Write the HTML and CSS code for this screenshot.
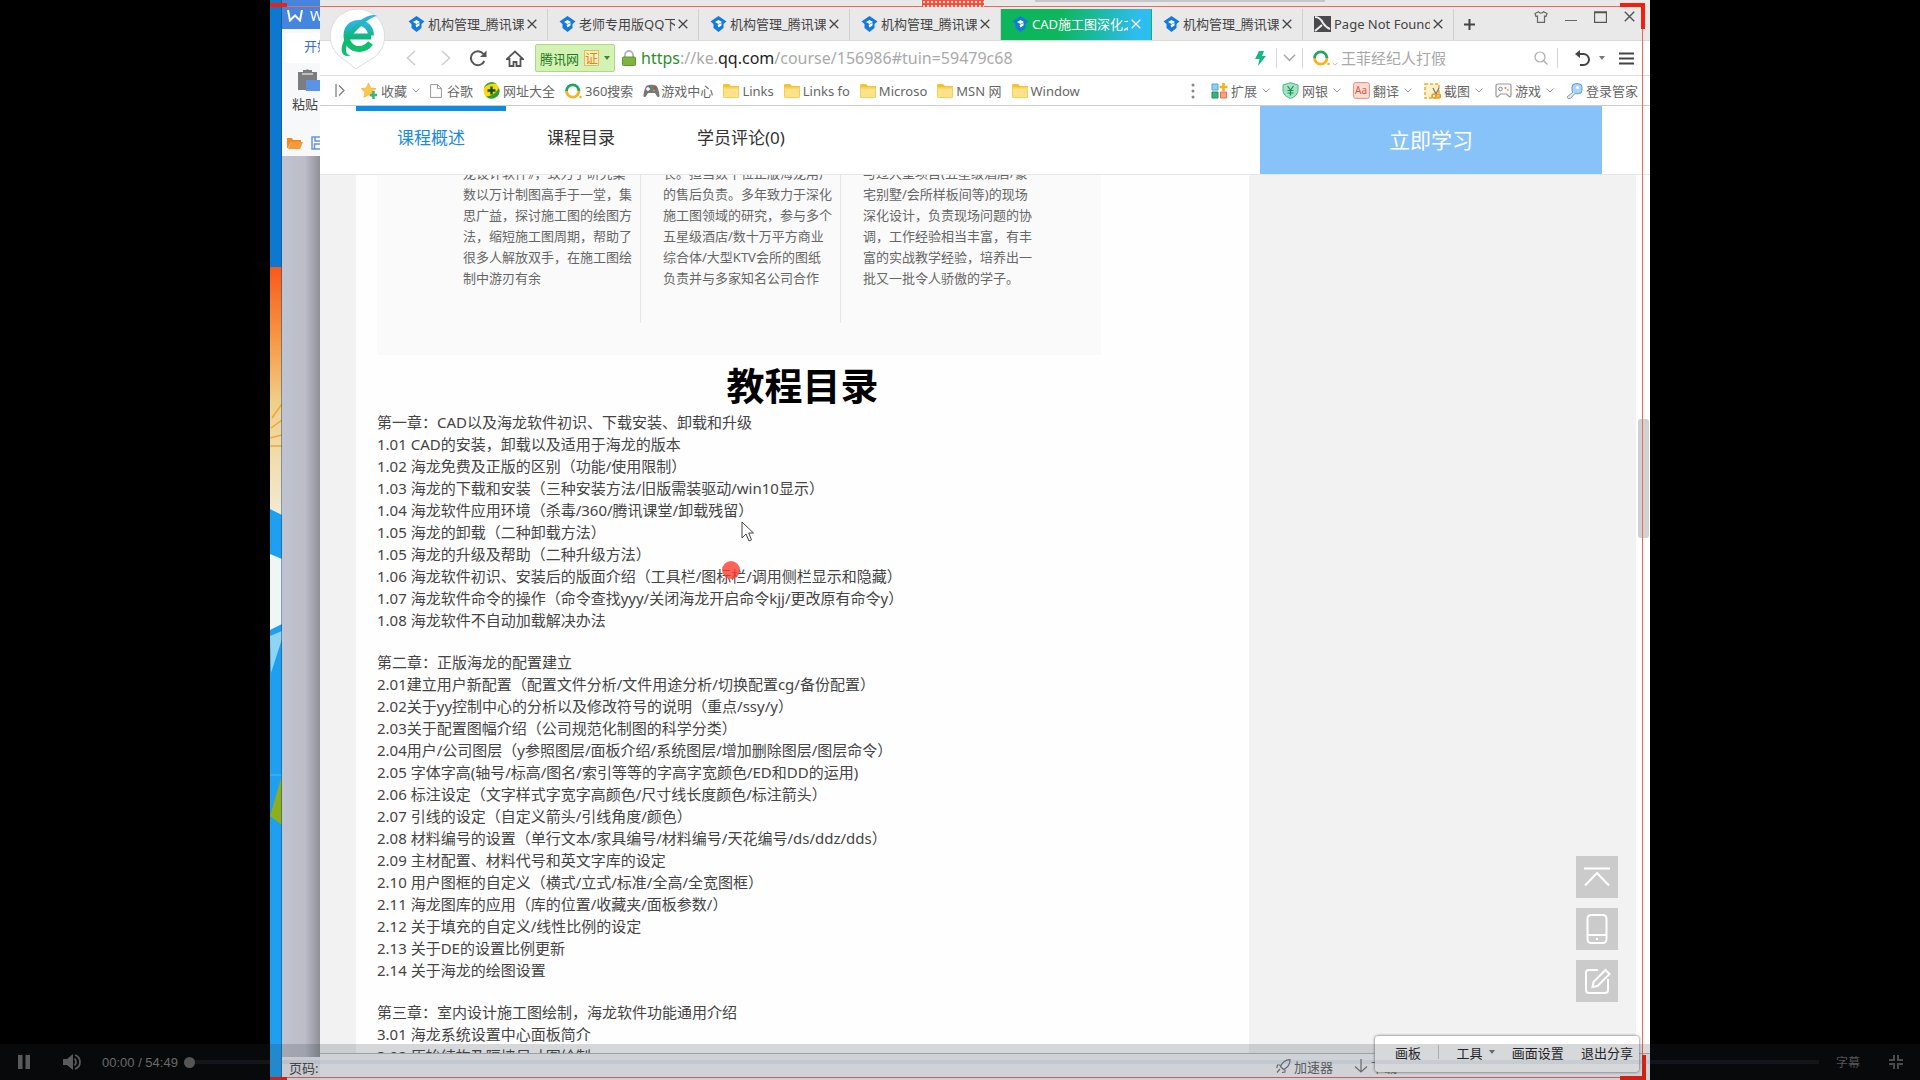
FILE: index.html
```html
<!DOCTYPE html>
<html lang="zh-CN">
<head>
<meta charset="utf-8">
<title>CAD施工图深化</title>
<link rel="stylesheet" href="styles.css">
</head>
<body>
<svg width="0" height="0" class="defs" aria-hidden="true">
  <defs>
    <linearGradient id="eg" x1="0" y1="0" x2="0" y2="1"><stop offset="0" stop-color="#2fb4e8"/><stop offset=".55" stop-color="#0fb67a"/><stop offset="1" stop-color="#0fc268"/></linearGradient>
    <linearGradient id="sun" x1="0" y1="0" x2="0" y2="1"><stop offset="0" stop-color="#f9591a"/><stop offset=".3" stop-color="#f79a45"/><stop offset=".55" stop-color="#f0cf8a"/><stop offset="1" stop-color="#f3ead2"/></linearGradient>
    <symbol id="ke" viewBox="0 0 16 16"><path d="M8 0 0 5.500l3 2.500v4l5 4 5-4V8l3-2.500z" fill="#1478dc"/><path d="M4.500 6 8 4l3.500 2L8 8zM7 9l4-2v2.500l-3 2z" fill="#fff"/></symbol>
    <symbol id="x" viewBox="0 0 10 10"><path d="M.7.700l8.600 8.600M9.300.700.700 9.300" stroke="currentColor" stroke-width="1.300" fill="none"/></symbol>
    <symbol id="chev" viewBox="0 0 8 5"><path d="M.500.500 4 4 7.500.500" stroke="currentColor" fill="none"/></symbol>
    <symbol id="folder" viewBox="0 0 16 14"><path d="M0 1.500C0 .500.500 0 1 0h5l2 2h8v3H0z" fill="#f4c430"/><rect y="3.500" width="16" height="10.500" rx="1" fill="#fde28a"/><rect x=".500" y="4" width="15" height="9.500" rx="1" fill="none" stroke="#f3cf5a"/></symbol>
    <symbol id="ring" viewBox="0 0 17 16"><path d="M1.500 8a6.200 6.200 0 0 1 12.400 0" fill="none" stroke="#1fa463" stroke-width="2.800"/><path d="M1.500 8a6.200 6.200 0 0 0 12.400 0" fill="none" stroke="#f9b21d" stroke-width="2.800"/><circle cx="15.500" cy="14" r="1.300" fill="#f9b21d"/></symbol>
  </defs>
</svg>
<div class="player">
  <main class="stage">
    <svg class="desktop" viewBox="0 0 12 1080" preserveAspectRatio="none" aria-hidden="true">
      <rect width="12" height="1080" fill="#1f9ff0"/>
      <rect width="12" height="267" fill="#0c78d0"/>
      <path d="M0 267h12v248L0 509z" fill="url(#sun)"/>
      <path d="M2 418l10-14M1 428l11-8M0 438l12-3M0 446h12" fill="none" stroke="#e8a93c" stroke-width="1.500"/>
      <path d="M0 554l12 5v65L0 630z" fill="#eef6f8"/>
      <path d="M0 636l12-5v8L1 673z" fill="#8fd4f2"/>
      <path d="M0 775h12" stroke="#4fb8f6"/>
      <path d="M12 775v50L0 816z" fill="#8fae1c"/>
      <path d="M11.500 0v1080" stroke="#0a4a80" stroke-opacity=".5"/>
    </svg>

    <aside class="wps">
      <div class="wps-title"><svg width="16" height="12" viewBox="0 0 16 12"><path d="M1 0l2 10.500 5-5 5 5L15 0" fill="none" stroke="#fff" stroke-width="2"/></svg><span>W</span></div>
      <div class="wps-tab">开始</div>
      <div class="wps-tools">
        <svg width="26" height="23" viewBox="0 0 26 23"><path d="M1 4h5V2h3a2 2 0 0 1 3 0h3v2h5v18H1z" fill="#7d7d80"/><path d="M5 6h11" stroke="#fff"/><rect x="9" y="12" width="17" height="11" fill="#5b93e6"/></svg>
        <span>粘贴</span>
      </div>
      <div class="wps-quick">
        <svg width="16" height="12" viewBox="0 0 16 12"><path d="M0 1h5l1 2h8v2H4L1 11H0z" fill="#f08a24"/><path d="M4 5h12l-3 7H1z" fill="#f79a35"/></svg>
        <svg width="14" height="14" viewBox="0 0 14 14"><path d="M1 1h11l1 2v10H1zM4 1v4h6V1M3.500 13V8h7v5" fill="none" stroke="#6c93d2" stroke-width="1.500"/></svg>
      </div>
      <div class="wps-doc"></div>
      <div class="wps-status">页码:</div>
    </aside>

    <section class="browser">
      <div class="tabbar">
        <nav class="tabs">
          <a class="tab" href="#"><svg width="17" height="16"><use href="#ke"/></svg><span>机构管理_腾讯课堂</span><svg width="10" height="10"><use href="#x"/></svg></a>
          <a class="tab" href="#"><svg width="17" height="16"><use href="#ke"/></svg><span>老师专用版QQ下载</span><svg width="10" height="10"><use href="#x"/></svg></a>
          <a class="tab" href="#"><svg width="17" height="16"><use href="#ke"/></svg><span>机构管理_腾讯课堂</span><svg width="10" height="10"><use href="#x"/></svg></a>
          <a class="tab" href="#"><svg width="17" height="16"><use href="#ke"/></svg><span>机构管理_腾讯课堂</span><svg width="10" height="10"><use href="#x"/></svg></a>
          <a class="tab active" href="#"><svg width="17" height="16"><use href="#ke"/></svg><span>CAD施工图深化之</span><svg width="10" height="10"><use href="#x"/></svg></a>
          <a class="tab" href="#"><svg width="17" height="16"><use href="#ke"/></svg><span>机构管理_腾讯课堂</span><svg width="10" height="10"><use href="#x"/></svg></a>
          <a class="tab" href="#"><svg width="17" height="16" viewBox="0 0 17 16"><path d="M0 0h17v16H0z" fill="#4a4a4e"/><path d="M1 1c4 0 6 2 8 6 2 3 4 5 7 6M1 15l7-6" fill="none" stroke="#eee" stroke-width="2"/></svg><span>Page Not Found</span><svg width="10" height="10"><use href="#x"/></svg></a>
          <button class="newtab" aria-label="新标签"><svg width="11" height="11" viewBox="0 0 11 11"><path d="M5.500 0v11M0 5.500h11" stroke="#444" stroke-width="2"/></svg></button>
        </nav>
        <div class="winbtns">
          <button aria-label="皮肤"><svg width="14" height="12" viewBox="0 0 14 12"><path d="M4.500.700 1 2.500l1 3 1.500-.500v6.300h7V5l1.500.500 1-3L9.500.700C8.500 2.500 5.500 2.500 4.500.700z" fill="none" stroke="#666" stroke-width="1.200"/></svg></button>
          <button aria-label="最小化"><svg width="12" height="12" viewBox="0 0 12 12"><path d="M0 9.500h12" stroke="#666"/></svg></button>
          <button aria-label="最大化"><svg width="13" height="12" viewBox="0 0 13 12"><path d="M.500 1h12v10.500H.500zM0 1.500h13" fill="none" stroke="#555" stroke-width="1.300"/></svg></button>
          <button aria-label="关闭"><svg width="11" height="11"><use href="#x"/></svg></button>
        </div>
      </div>

      <div class="address">
        <button class="dim" aria-label="后退"><svg width="10" height="16" viewBox="0 0 10 16"><path d="M9 1 1.500 8 9 15" fill="none" stroke="#cfcfcf" stroke-width="1.700"/></svg></button>
        <button class="dim" aria-label="前进"><svg width="10" height="16" viewBox="0 0 10 16"><path d="M1 1l7.500 7L1 15" fill="none" stroke="#cfcfcf" stroke-width="1.700"/></svg></button>
        <button aria-label="刷新"><svg width="18" height="17" viewBox="0 0 18 17"><path d="M14.500 4A7 7 0 1 0 15.300 11" fill="none" stroke="#555" stroke-width="2"/><path d="M17.500.500V7H11z" fill="#555"/></svg></button>
        <button aria-label="主页"><svg width="18" height="17" viewBox="0 0 18 17"><path d="M1 9l8-7.500L17 9h-2.500v7h-4v-4h-3v4h-4V9z" fill="none" stroke="#555" stroke-width="1.800"/></svg></button>
        <button class="site"><span>腾讯网</span><b>证</b><i class="caret"></i></button>
        <svg class="lock" width="14" height="16" viewBox="0 0 14 16"><path d="M3 8V5a4 4 0 0 1 8 0v3" fill="none" stroke="#b5b5b5" stroke-width="1.800"/><rect x=".500" y="7" width="13" height="8.500" rx="1" fill="#7cb342" stroke="#5f9a2a"/></svg>
        <div class="url" role="textbox" aria-label="地址" contenteditable="true" spellcheck="false"><span class="secure">https</span>://ke.<span class="host">qq.com</span>/course/156986#tuin=59479c68</div>
        <svg width="11" height="15" viewBox="0 0 11 15"><path d="M4 0h5L7 5h4L3 15l1.500-7H0z" fill="#16b888"/></svg>
        <button class="drop" aria-label="历史"><svg width="13" height="8" viewBox="0 0 8 5"><use href="#chev"/></svg></button>
        <form class="search">
          <svg width="17" height="16"><use href="#ring"/></svg><svg class="engine" width="6" height="4" viewBox="0 0 8 5"><use href="#chev"/></svg>
          <input type="text" aria-label="搜索" placeholder="王菲经纪人打假">
          <svg width="14" height="14" viewBox="0 0 14 14"><circle cx="6" cy="6" r="5" fill="none" stroke="#aaa" stroke-width="1.200"/><path d="M9.700 9.700 13.500 13.500" stroke="#aaa" stroke-width="1.300"/></svg>
        </form>
        <button class="undo" aria-label="恢复"><svg width="15" height="16" viewBox="0 0 15 16"><path d="M3 4h5.500a5 5 0 0 1 0 11H5" fill="none" stroke="#444" stroke-width="2"/><path d="M0 4l5-4v8z" fill="#444"/></svg></button>
        <i class="caret grey"></i>
        <button class="menu" aria-label="菜单"><svg width="15" height="13" viewBox="0 0 15 13"><path d="M0 1.500h15M0 6.500h15M0 11.500h15" stroke="#444" stroke-width="2"/></svg></button>
      </div>

      <div class="bookmarks">
        <svg class="side" width="10" height="13" viewBox="0 0 10 13"><path d="M1 0v13M4 1.500l5 5-5 5" fill="none" stroke="#777" stroke-width="1.200"/></svg>
        <a href="#"><svg width="17" height="16" viewBox="0 0 17 16"><path d="M7.500 0l2.300 5 5.200.500-4 3.600 1.200 5.400-4.700-2.800L2.800 14.500 4 9.100 0 5.500 5.200 5z" fill="#fbc84a" stroke="#eda92d" stroke-width=".600"/><path d="M12.500 8v8M9 12h7" stroke="#3eb37c" stroke-width="2.500"/></svg>收藏<svg class="chev" width="8" height="5"><use href="#chev"/></svg></a>
        <a class="page" href="#"><svg width="12" height="14" viewBox="0 0 12 14"><path d="M.600.600h7l3.800 3.800v9H.600zM7.500.600v4h4" fill="#fff" stroke="#999"/></svg>谷歌</a>
        <a href="#"><svg width="17" height="17" viewBox="0 0 17 17"><circle cx="8.500" cy="8.500" r="8" fill="#f6d912"/><path d="M3 14.500A8 8 0 0 0 16 6c-3 5-7 8-13 8.500z" fill="#2f9b36"/><path d="M1 6a8 8 0 0 1 13-4C9 1 4 2 1 6z" fill="#3aa53e"/><path d="M8.500 4.500v8M4.500 8.500h8" stroke="#14501d" stroke-width="2.400"/></svg>网址大全</a>
        <a href="#"><svg width="17" height="16"><use href="#ring"/></svg>360搜索</a>
        <a class="game" href="#"><svg width="17" height="14" viewBox="0 0 17 14"><path d="M4 1.500c2-1 7-1 9 0 2 1 3.500 8 3.500 10s-2 2-3 0L12 9H5l-1.500 2.500c-1 2-3 2-3 0S2 2.500 4 1.500z" fill="#777"/><path d="M5 3v4M3 5h4" stroke="#fff" stroke-width="1.400"/><circle cx="12" cy="4" r="1.200" fill="#e33"/><circle cx="11" cy="6.500" r="1.100" fill="#5c5"/></svg>游戏中心</a>
        <a href="#"><svg width="16" height="14"><use href="#folder"/></svg>Links</a>
        <a href="#"><svg width="16" height="14"><use href="#folder"/></svg>Links fo</a>
        <a href="#"><svg width="16" height="14"><use href="#folder"/></svg>Microso</a>
        <a href="#"><svg width="16" height="14"><use href="#folder"/></svg>MSN 网</a>
        <a href="#"><svg width="16" height="14"><use href="#folder"/></svg>Window</a>
        <div class="ext">
          <svg class="dots" width="4" height="16" viewBox="0 0 4 16"><circle cx="2" cy="2" r="1.500"/><circle cx="2" cy="8" r="1.500"/><circle cx="2" cy="14" r="1.500"/></svg>
          <a href="#"><svg width="17" height="16" viewBox="0 0 17 16"><path d="M1 1h6v6H1z" fill="#8fd0f5" stroke="#4aa3dc"/><path d="M1 9h6v6H1z" fill="#35b57a" stroke="#228e5b"/><path d="M9.500 9h6v6h-6z" fill="#ffa184" stroke="#ef6a4a"/><path d="M12.500 0v8M8.500 4h8" stroke="#f3b11b" stroke-width="2.600"/></svg>扩展<svg class="chev" width="8" height="5"><use href="#chev"/></svg></a>
          <a href="#"><svg width="17" height="17" viewBox="0 0 17 17"><path d="M8.500.700 16 3v5c0 4-3 7-7.500 8.500C4 15 1 12 1 8V3z" fill="#a5e3c4" stroke="#44b582"/><path d="M5.500 4l3 4 3-4M8.500 8v5.500M5.500 8.500h6M5.500 11h6" stroke="#1c8d5a" stroke-width="1.200" fill="none"/></svg>网银<svg class="chev" width="8" height="5"><use href="#chev"/></svg></a>
          <a href="#"><svg width="17" height="17" viewBox="0 0 17 17"><rect x=".600" y=".600" width="15.800" height="15.800" rx="2" fill="#fcdcd4" stroke="#e98b76"/><text x="2" y="12" font-size="10" fill="#d9553c">Aa</text></svg>翻译<svg class="chev" width="8" height="5"><use href="#chev"/></svg></a>
          <a href="#"><svg width="17" height="16" viewBox="0 0 17 16"><rect x="1" y="1" width="14" height="14" fill="#fff0c8" stroke="#f0a92a" stroke-width="1.500" stroke-dasharray="3 2"/><path d="M9 5l3 6M15 5l-3 6" stroke="#777" stroke-width="1.300"/><circle cx="10" cy="13" r="2" fill="none" stroke="#ef9a1e" stroke-width="1.500"/><circle cx="14.500" cy="13" r="2" fill="none" stroke="#ef9a1e" stroke-width="1.500"/></svg>截图<svg class="chev" width="8" height="5"><use href="#chev"/></svg></a>
          <a href="#"><svg width="17" height="15" viewBox="0 0 17 15"><path d="M3 1h11q2 0 2 2v9q0 2-1.500 2L11.500 11h-6l-3 3Q1 14 1 12V3q0-2 2-2z" fill="#fafafa" stroke="#999" stroke-width="1.200"/><circle cx="5.500" cy="6" r="1.800" fill="none" stroke="#888"/><circle cx="10.500" cy="5" r="1" fill="#e66"/><circle cx="12.800" cy="7" r="1" fill="#e9a93c"/></svg>游戏<svg class="chev" width="8" height="5"><use href="#chev"/></svg></a>
          <a href="#"><svg width="17" height="16" viewBox="0 0 17 16"><rect x="6" y=".700" width="10" height="10" rx="3.500" fill="#a9d4f3" stroke="#5c9ccc"/><path d="M7 9l-6 5 1 1.500h2.500L9 10.500" fill="#dceaf4" stroke="#8899a8"/><circle cx="11.500" cy="4.500" r="1.500" fill="#fff"/></svg>登录管家</a>
        </div>
      </div>

      <header class="coursebar">
        <nav>
          <a class="on" href="#">课程概述</a><a href="#">课程目录</a><a href="#">学员评论(0)</a>
        </nav>
        <button class="study">立即学习</button>
      </header>

      <div class="viewport">
        <article class="sheet">
          <div class="intro">
            <p>龙设计软件》，致力于研究集<br>数以万计制图高手于一堂，集<br>思广益，探讨施工图的绘图方<br>法，缩短施工图周期，帮助了<br>很多人解放双手，在施工图绘<br>制中游刃有余</p>
            <p>长。担当数十位正版海龙用户<br>的售后负责。多年致力于深化<br>施工图领域的研究，参与多个<br>五星级酒店/数十万平方商业<br>综合体/大型KTV会所的图纸<br>负责并与多家知名公司合作</p>
            <p>与过大型项目(五星级酒店/豪<br>宅别墅/会所样板间等)的现场<br>深化设计，负责现场问题的协<br>调，工作经验相当丰富，有丰<br>富的实战教学经验，培养出一<br>批又一批令人骄傲的学子。</p>
          </div>
          <h1>教程目录</h1>
          <ul>
            <li>第一章：CAD以及海龙软件初识、下载安装、卸载和升级</li>
            <li>1.01 CAD的安装，卸载以及适用于海龙的版本</li>
            <li>1.02 海龙免费及正版的区别（功能/使用限制）</li>
            <li>1.03 海龙的下载和安装（三种安装方法/旧版需装驱动/win10显示）</li>
            <li>1.04 海龙软件应用环境（杀毒/360/腾讯课堂/卸载残留）</li>
            <li>1.05 海龙的卸载（二种卸载方法）</li>
            <li>1.05 海龙的升级及帮助（二种升级方法）</li>
            <li>1.06 海龙软件初识、安装后的版面介绍（工具栏/图标栏/调用侧栏显示和隐藏）</li>
            <li>1.07 海龙软件命令的操作（命令查找yyy/关闭海龙开启命令kjj/更改原有命令y）</li>
            <li>1.08 海龙软件不自动加载解决办法</li>
          </ul>
          <ul>
            <li>第二章：正版海龙的配置建立</li>
            <li>2.01建立用户新配置（配置文件分析/文件用途分析/切换配置cg/备份配置）</li>
            <li>2.02关于yy控制中心的分析以及修改符号的说明（重点/ssy/y）</li>
            <li>2.03关于配置图幅介绍（公司规范化制图的科学分类）</li>
            <li>2.04用户/公司图层（y参照图层/面板介绍/系统图层/增加删除图层/图层命令）</li>
            <li>2.05 字体字高(轴号/标高/图名/索引等等的字高字宽颜色/ED和DD的运用)</li>
            <li>2.06 标注设定（文字样式字宽字高颜色/尺寸线长度颜色/标注箭头）</li>
            <li>2.07 引线的设定（自定义箭头/引线角度/颜色）</li>
            <li>2.08 材料编号的设置（单行文本/家具编号/材料编号/天花编号/ds/ddz/dds）</li>
            <li>2.09 主材配置、材料代号和英文字库的设定</li>
            <li>2.10 用户图框的自定义（横式/立式/标准/全高/全宽图框）</li>
            <li>2.11 海龙图库的应用（库的位置/收藏夹/面板参数/）</li>
            <li>2.12 关于填充的自定义/线性比例的设定</li>
            <li>2.13 关于DE的设置比例更新</li>
            <li>2.14 关于海龙的绘图设置</li>
          </ul>
          <ul>
            <li>第三章：室内设计施工图绘制，海龙软件功能通用介绍</li>
            <li>3.01 海龙系统设置中心面板简介</li>
            <li>3.02 原始结构及隔墙尺寸图绘制</li>
          </ul>
        </article>
        <div class="scroll"><div class="thumb"></div></div>
        <div class="float">
          <button aria-label="返回顶部"><svg width="28" height="20" viewBox="0 0 28 20"><path d="M1 1.500h26M2 18.500 14 6l12 12.500" fill="none" stroke="#fff" stroke-width="2"/></svg></button>
          <button aria-label="手机版"><svg width="22" height="30" viewBox="0 0 22 30"><rect x="1.500" y="1" width="19" height="28" rx="3.500" fill="none" stroke="#fff" stroke-width="2"/><path d="M2 21h18" stroke="#fff" stroke-width="2"/><circle cx="11" cy="25" r="1.200" fill="#fff"/></svg></button>
          <button aria-label="反馈"><svg width="27" height="26" viewBox="0 0 27 26"><path d="M14 2H5Q2 2 2 5v17q0 3 3 3h16q3 0 3-3V11M8.500 19l1-5L21.500 2l4 4L13.500 18z" fill="none" stroke="#fff" stroke-width="2"/></svg></button>
        </div>
      </div>

      <footer class="statusbar">
        <svg width="15" height="14" viewBox="0 0 15 14"><path d="M14 .700C9 1 6 4 4.500 7.500L7.500 10.500C11 9 14 6 14 .700zM4.500 6H1.500L.700 9M9 10.500v2.500L6 13.500M4 10l-3 3.500" fill="none" stroke="#777" stroke-width="1.200"/></svg>
        <span>加速器</span>
        <svg class="down" width="14" height="14" viewBox="0 0 14 14"><path d="M7 0v13M1 7.500l6 5.500 6-5.500" fill="none" stroke="#777" stroke-width="1.200"/></svg>
        <span>下载</span>
      </footer>
      <svg class="logo" width="56" height="64" viewBox="0 0 56 64">
        <path d="M28 1a27 27 0 0 1 11 51.500Q33 56 26 61 20 56 14 51.500A27 27 0 0 1 28 1z" fill="#fff" stroke="#dcdcdc"/>
        <path d="M16.500 28.500H41M41 27.500c0-7-5-12.500-12-12.500-8 0-12.500 5.500-12.500 12.500S21 41 29 41c5.500 0 9-2.500 11.500-6" fill="none" stroke="url(#eg)" stroke-width="6"/>
        <path d="M47 8c-4-3-14 1-22 9-9 9-15 21-13 27 1 4 5 5 9 3-3 0-5-1-5-5 0-6 6-16 14-23C37 12 44 8 47 8z" fill="url(#eg)"/>
      </svg>
    </section>

    <div class="frame"></div>
    <div class="corner tl"></div><div class="corner tr"></div><div class="corner bl"></div><div class="corner br"></div>
    <div class="grip"></div>
    <div class="shade"></div>
    <div class="laser"></div>
    <svg class="pointer" width="14" height="22" viewBox="0 0 14 22"><path d="M1 1v16l4-4 3 7 2.500-1.200L7.700 12H12.500z" fill="#fff" stroke="#444"/></svg>
    <div class="sharebar">
      <button>画板</button><span class="rule"></span><button class="tool">工具 <i class="caret grey"></i></button><button>画面设置</button><button>退出分享</button>
    </div>
  </main>

  <div class="controls">
    <button aria-label="暂停"><svg width="12" height="14" viewBox="0 0 12 14"><path d="M0 0h4.500v14H0zM7.500 0H12v14H7.500z" fill="#5a5a5a"/></svg></button>
    <button class="vol" aria-label="音量"><svg width="18" height="16" viewBox="0 0 18 16"><path d="M0 5h4l6-5v16l-6-5H0z" fill="#5a5a5a"/><path d="M11.500 4.500q3 3.500 0 7M12 1q5 2 5 7t-5 7" fill="none" stroke="#5a5a5a" stroke-width="1.800"/></svg></button>
    <span class="time">00:00 / 54:49</span>
    <input type="range" aria-label="进度" min="0" max="3289" value="0">
    <button class="cc">字幕</button>
    <button aria-label="退出全屏"><svg width="14" height="14" viewBox="0 0 14 14"><path d="M5 0v5H0M9 0v5h5M5 14V9H0M9 14V9h5" fill="none" stroke="#4a4a4a" stroke-width="2"/></svg></button>
  </div>
</div>
</body>
</html>
```
FILE: styles.css
```css
* { box-sizing: border-box; }
body { margin: 0; background: #000; font-family: "Noto Sans", "Noto Sans CJK SC", sans-serif; font-size: 13px; color: #444; }
button { border: 0; padding: 0; background: none; font: inherit; color: inherit; display: flex; align-items: center; white-space: nowrap; }
a { color: inherit; text-decoration: none; }
svg { flex: none; display: block; }
.defs { position: absolute; }
.player { position: relative; height: 100vh; overflow: hidden; }
.stage { position: relative; height: 100%; aspect-ratio: 23 / 18; margin: 0 auto; display: flex; overflow: hidden; }
.desktop { width: 12px; height: 100%; }

.wps { width: 38px; display: flex; flex-direction: column; overflow: hidden; white-space: nowrap; background: #f7f8fa; }
.wps-title { height: 29px; padding: 2px 0 0 5px; display: flex; align-items: center; gap: 7px; background: #4585dd; color: #fff; font-size: 14px; }
.wps-tab { height: 30px; margin: 4px 0 0 4px; padding-left: 18px; line-height: 26px; background: #fff; color: #2f6fd0; }
.wps-tools { padding: 5px 0 0 10px; display: flex; flex-direction: column; gap: 3px; height: 66px; }
.wps-tools span { line-height: 20px; }
.wps-tools svg { margin-left: 5px; }
.wps-quick { height: 27px; padding: 0 0 0 5px; display: flex; align-items: center; gap: 8px; }
.wps-doc { flex: 1; background: linear-gradient(90deg, #bfc4d0, #bcbdc9 60%, #8f909a); }
.wps-status { height: 23px; padding-left: 7px; line-height: 22px; background: #eceef0; }

.browser { position: relative; flex: 1; min-width: 0; display: flex; flex-direction: column; background: #fff; }
.tabbar { height: 41px; padding-left: 77px; display: flex; justify-content: space-between; background: #e9e9e9; border-bottom: 1px solid #d9d9d9; }
.tabs { display: flex; align-items: flex-end; }
.tab { width: 151px; height: 31px; padding: 0 10px 2px 11px; display: flex; align-items: center; gap: 3px; border-right: 1px solid #d0d0d0; white-space: nowrap; color: #444; }
.tab span { flex: 1; overflow: hidden; }
.tab.active { background: linear-gradient(100deg, #0db65c 40%, #2dbdf0 90%); color: #fff; border-color: transparent; }
.newtab { height: 31px; padding-left: 10px; }
.winbtns { display: flex; gap: 17px; padding: 11px 15px 0 0; align-items: flex-start; height: 24px; color: #555; }

.address { height: 35px; display: flex; align-items: center; border-bottom: 1px solid #dedede; padding: 0 16px 0 86px; }
.address > button { margin-right: 19px; }
.address > .dim { margin-right: 25px; }
.address > .dim + .dim { margin-right: 18px; }
.address > .dim + .dim + button { margin-right: 19px; }
.address > button:nth-of-type(4) { margin-right: 11px; }
.address > .site { height: 28px; width: 80px; padding: 0 4px; justify-content: space-between; background: #d5f2b5; border: 1px solid #a8dc84; border-radius: 2px; color: #23781e; margin-right: 7px; }
.site b { font-weight: 400; color: #d98a10; background: #fff0c4; border: 1px solid #e8b95a; line-height: 14px; }
.caret { border: 3px solid transparent; border-top: 4px solid #3a8a34; border-bottom: 0; }
.caret.grey { border-top-color: #777; }
.lock { margin-right: 5px; }
.url { flex: 1; min-width: 0; overflow: hidden; white-space: nowrap; font-size: 16px; color: #aaa; outline: 0; }
.secure { color: #2a8f2a; }
.host { color: #222; }
.address > .drop { height: 20px; margin: 0 0 0 10px; padding: 0 6px; border-left: 1px solid #d5d5d5; border-right: 1px solid #d5d5d5; color: #aaa; }
.search { width: 255px; height: 20px; padding: 0 9px 0 10px; display: flex; align-items: center; border-right: 1px solid #d5d5d5; color: #aaa; }
.engine { margin: 12px 0 0 2px; }
.search input { flex: 1; min-width: 0; border: 0; padding: 0 0 0 3px; background: none; outline: 0; font: 15px "Noto Sans", "Noto Sans CJK SC", sans-serif; }
.search input::placeholder { color: #a8a8a8; opacity: 1; }
.address > .undo { margin: 0 9px 0 17px; }
.address > .menu { margin: 0 0 0 14px; }

.bookmarks { height: 30px; padding: 0 12px 0 15px; display: flex; align-items: center; gap: 10px; border-bottom: 1px solid #ccc; white-space: nowrap; color: #666; }
.bookmarks a { display: flex; align-items: center; gap: 3px; }
.bookmarks .side { margin-right: 6px; }
.bookmarks .page { gap: 5px; }
.bookmarks .game { gap: 1px; }
.chev { margin-left: 2px; color: #999; }
.ext { flex: 1; display: flex; align-items: center; justify-content: flex-end; gap: 12px; }
.dots { fill: #888; margin-right: 4px; }

.coursebar { height: 69px; padding: 0 48px 0 36px; display: flex; justify-content: space-between; border-bottom: 1px solid #e6e6e6; }
.coursebar nav { display: flex; font-size: 17px; color: #333; }
.coursebar a { padding: 5px 41px 0; line-height: 54px; border-top: 0 solid #0e8ce4; }
.coursebar a.on { color: #1a8bdc; border-top-width: 5px; padding-top: 0; }
.study { width: 342px; padding-bottom: 2px; justify-content: center; background: #87c2f9; color: #fff; font-size: 21px; }

.viewport { position: relative; flex: 1; min-height: 0; overflow: hidden; display: flex; align-items: stretch; justify-content: space-between; background: #f2f2f2; padding-left: 36px; }
.sheet { width: 893px; padding: 0 21px; background: #fefefe; overflow: hidden; }
.intro { width: 724px; margin-top: -12px; padding: 0 0 32px 86px; display: flex; background: #fafafa; color: #666; white-space: nowrap; line-height: 21px; }
.intro p { width: 177px; margin: 0; padding-bottom: 34px; }
.intro p + p { width: 200px; padding-left: 22px; border-left: 1px solid #e6e6e6; }
.sheet h1 { margin: 4px 0 0; line-height: 52px; font-size: 38px; text-align: center; color: #000; }
.sheet ul { margin: 0 0 20px; padding: 0; list-style: none; font-size: 15px; line-height: 22px; white-space: nowrap; }
.scroll { width: 14px; background: #fff; }
.thumb { width: 11px; height: 119px; margin: 244px 0 0 2px; border-radius: 3px; background: #cfd2d2; }
.float { position: absolute; right: 32px; bottom: 51px; display: flex; flex-direction: column; gap: 10px; }
.float button { width: 42px; height: 42px; justify-content: center; background: #cbcbcb; }
.statusbar { height: 27px; padding: 0 0 2px 956px; display: flex; align-items: center; gap: 3px; background: #f6f9fc; border-top: 1px solid #b8babd; color: #666; white-space: nowrap; }
.statusbar .down { margin-left: 18px; }
.logo { position: absolute; left: 10px; top: 8px; }

.frame { position: absolute; inset: 6px 7px 2px 0; border: solid #f0695c; border-width: 1px 1px 1px 0; }
.corner { position: absolute; border: 0 solid #f41e0c; }
.tl { left: 0; top: 3px; width: 17px; border-top-width: 4px; }
.bl { left: 0; bottom: 0; width: 17px; border-top-width: 3px; }
.tr { right: 5px; top: 3px; width: 25px; height: 26px; border-width: 4px 4px 0 0; }
.br { right: 4px; bottom: 0; width: 26px; height: 25px; border-width: 0 4px 4px 0; }
.grip { position: absolute; left: 652px; top: 0; width: 62px; height: 7px; background: radial-gradient(circle, #ffd8d2 1px, transparent 1px) 0 0 / 4px 4px #f4513d; }
.shade { position: absolute; left: 765px; top: 0; width: 290px; height: 2px; background: #c9c5c6; }
.laser { position: absolute; left: 452px; top: 561px; width: 18px; height: 18px; border-radius: 50%; background: #ff3c2e; opacity: .8; }
.pointer { position: absolute; left: 471px; top: 521px; }
.sharebar { position: absolute; right: 11px; bottom: 8px; width: 264px; height: 36px; padding: 0 6px 4px 20px; display: flex; align-items: center; justify-content: space-between; background: #fff; border-radius: 3px; box-shadow: 0 0 3px #555; color: #222; white-space: nowrap; }
.rule { width: 1px; height: 14px; background: #ccc; }
.tool { gap: 6px; }

.controls { position: absolute; left: 0; right: 0; bottom: 0; height: 36px; padding: 0 17px 0 18px; display: flex; align-items: center; background: rgba(44, 48, 56, .19); color: #666; }
.vol { margin: 0 21px 0 33px; }
.time { font: 13px "Liberation Sans", sans-serif; color: #6a6a6a; }
.controls input { flex: 1; min-width: 0; height: 12px; margin: 0 17px 0 6px; appearance: none; background: linear-gradient(rgba(90, 120, 150, .12), rgba(90, 120, 150, .12)) center / 100% 4px no-repeat; }
.controls input::-webkit-slider-thumb { appearance: none; width: 11px; height: 11px; border-radius: 50%; background: #555; }
.cc { font-size: 12px; color: #555; margin-right: 29px; }
```
